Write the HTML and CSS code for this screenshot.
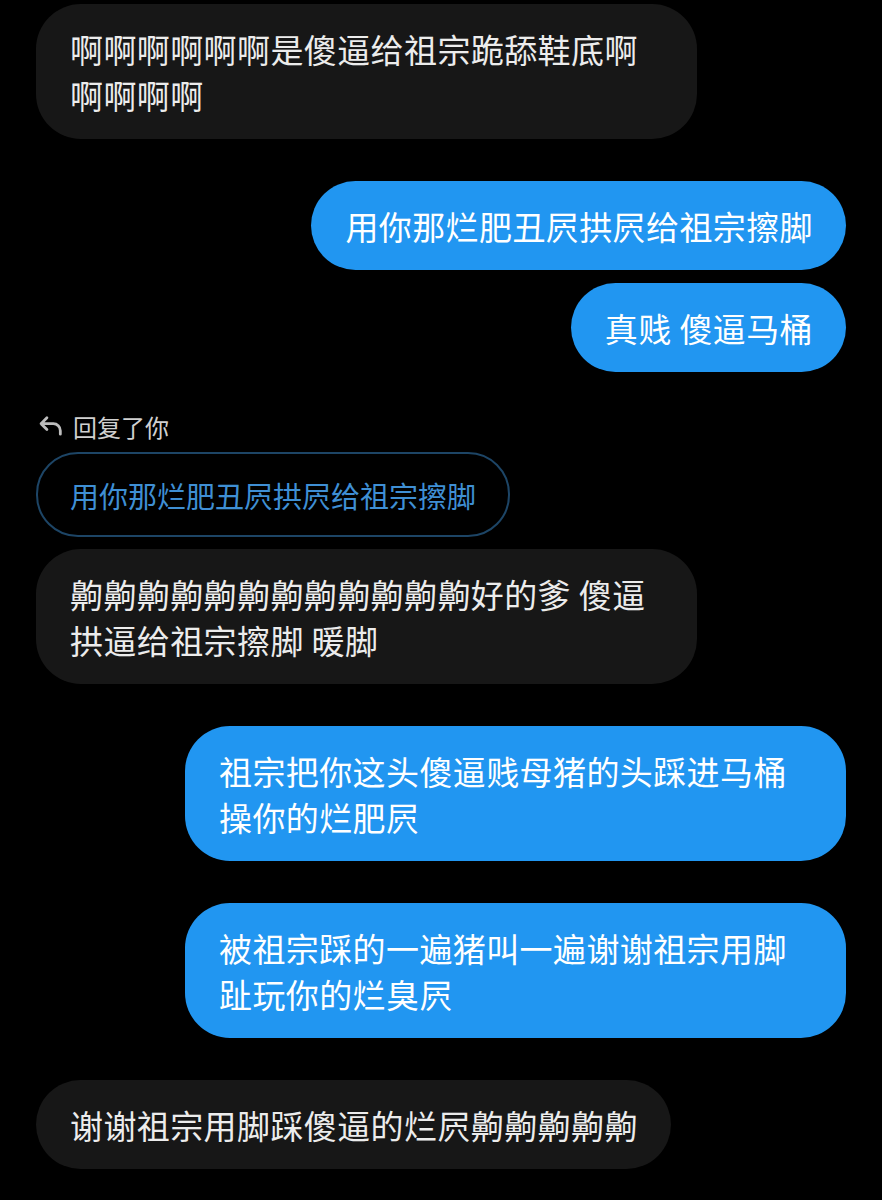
FILE: index.html
```html
<!DOCTYPE html>
<html lang="zh-CN">
<head>
  <meta charset="UTF-8">
  <meta name="viewport" content="width=device-width, initial-scale=1.0">
  <title>聊天</title>
  <link rel="stylesheet" href="styles.css">
</head>
<body>
  <main class="chat">
    <div class="msg in">
      <p class="bubble">啊啊啊啊啊啊是傻逼给祖宗跪舔鞋底啊啊啊啊啊</p>
    </div>

    <div class="msg out group">
      <p class="bubble">用你那烂肥丑屄拱屄给祖宗擦脚</p>
      <p class="bubble">真贱 傻逼马桶</p>
    </div>

    <div class="msg in reply">
      <div class="reply-label">
        <svg class="reply-icon" viewBox="0 0 24 24" width="28" height="28">
          <path d="M8.5 5 L3.5 10 L8.5 15 M3.5 10 H14 a6 6 0 0 1 6 6 V19" fill="none" stroke="#bdbdbd" stroke-width="2.4" stroke-linecap="round" stroke-linejoin="round"/>
        </svg>
        <span>回复了你</span>
      </div>
      <p class="quote">用你那烂肥丑屄拱屄给祖宗擦脚</p>
      <p class="bubble">齁齁齁齁齁齁齁齁齁齁齁齁好的爹 傻逼拱逼给祖宗擦脚 暖脚</p>
    </div>

    <div class="msg out">
      <p class="bubble">祖宗把你这头傻逼贱母猪的头踩进马桶操你的烂肥屄</p>
    </div>

    <div class="msg out">
      <p class="bubble">被祖宗踩的一遍猪叫一遍谢谢祖宗用脚趾玩你的烂臭屄</p>
    </div>

    <div class="msg in">
      <p class="bubble">谢谢祖宗用脚踩傻逼的烂屄齁齁齁齁齁</p>
    </div>
  </main>
</body>
</html>
```

FILE: styles.css
```css
body {
  margin: 0;
  background: #000;
  font-family: "Noto Sans CJK SC", "Noto Sans", sans-serif;
  color: #f0f0f0;
}
.chat {
  display: flex;
  flex-direction: column;
  gap: 42px;
  padding: 4px 36px 30px;
}
.msg {
  display: flex;
  flex-direction: column;
  gap: 13px;
}
.msg.in {
  align-items: flex-start;
}
.msg.out {
  align-items: flex-end;
}
.bubble {
  margin: 0;
  max-width: 661px;
  box-sizing: border-box;
  padding: 21.5px 33px 21.5px 34px;
  border-radius: 45px;
  font-size: 33px;
  letter-spacing: 0.4px;
  line-height: 46px;
}
.msg.in .bubble {
  background: #171717;
  color: #ececec;
}
.msg.out .bubble {
  background: #2196f1;
  color: #fff;
}
.msg.reply {
  gap: 0;
  margin-top: -5px;
}
.reply-label {
  display: flex;
  align-items: center;
  gap: 8px;
  padding-left: 1px;
  height: 34px;
  font-size: 24px;
  color: #d0d0d0;
}
.reply-icon {
  display: block;
}
.quote {
  margin: 9px 0 12px;
  box-sizing: border-box;
  padding: 20.5px 32px;
  border: 2px solid #1d4566;
  border-radius: 42px;
  font-size: 29px;
  line-height: 40px;
  color: #3f8fd4;
}
```
